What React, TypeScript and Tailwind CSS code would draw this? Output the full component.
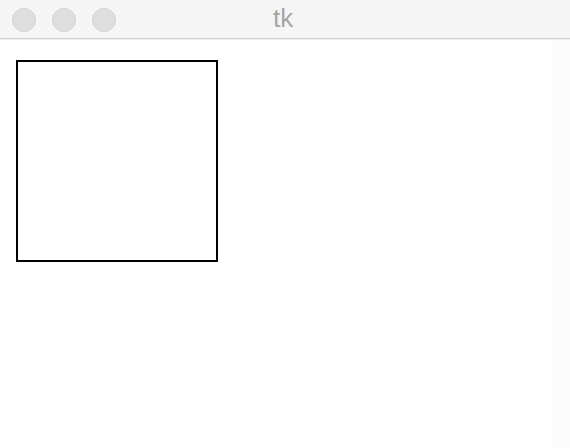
export default function App() {
  return (
    <div className="w-[570px] h-[448px] bg-white flex flex-col font-['Liberation_Sans',sans-serif]">
      {/* Title bar */}
      <div className="h-[39px] shrink-0 bg-[#f5f5f5] border-b border-[#d4d4d4] relative flex items-center">
        <div className="flex gap-4 pl-3 pt-px">
          <span className="w-6 h-6 rounded-full bg-[#dedede] border border-[#d2d2d2]" />
          <span className="w-6 h-6 rounded-full bg-[#dedede] border border-[#d2d2d2]" />
          <span className="w-6 h-6 rounded-full bg-[#dedede] border border-[#d2d2d2]" />
        </div>
        <span className="absolute left-[273px] top-[3px] text-[26px] leading-[30px] text-[#a6a6a6]">tk</span>
      </div>

      {/* Canvas */}
      <div className="flex-1 flex border-t border-[#ececec]">
        <div className="flex-1 pl-4 pt-5">
          <div className="w-[202px] h-[202px] border-2 border-black" />
        </div>
        <div className="w-[18px] bg-[#fcfcfc]" />
      </div>
    </div>
  );
}
